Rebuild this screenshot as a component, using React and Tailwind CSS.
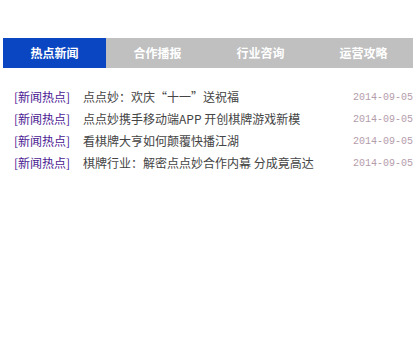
const tabs = ['热点新闻', '合作播报', '行业咨询', '运营攻略'];

const news = [
    { title: '点点妙：欢庆“十一”送祝福', date: '2014-09-05' },
    { title: '点点妙携手移动端APP 开创棋牌游戏新模', date: '2014-09-05' },
    { title: '看棋牌大亨如何颠覆快播江湖', date: '2014-09-05' },
    { title: '棋牌行业：解密点点妙合作内幕 分成竟高达', date: '2014-09-05' }
];

const App = () => {
    return (
        <div className="w-[413px] h-[346px] bg-white overflow-hidden" style={{ fontFamily: '"Noto Sans CJK SC", sans-serif' }}>
            {/* Tabs */}
            <div className="mt-[38px] ml-[3px] flex h-[30px] w-[412px] bg-[#c0c0c0]">
                {tabs.map((t, i) => (
                    <div
                        key={t}
                        className={`w-[103px] shrink-0 flex items-center justify-center text-[12px] font-bold text-white ${i === 0 ? 'bg-[#0b46c2]' : ''}`}
                    >
                        {t}
                    </div>
                ))}
            </div>

            {/* News list */}
            <ul className="mt-[18px] pl-[14px] text-[12px]">
                {news.map((n, i) => (
                    <li key={i} className="flex items-center h-[22px]">
                        <span className="w-[69px] shrink-0 text-[#4b1a93]">[新闻热点]</span>
                        <span className="flex-1 text-[#444444] whitespace-nowrap overflow-hidden">{n.title}</span>
                        <span className="shrink-0 w-[60px] text-[#b59cab] text-[10px]" style={{ fontFamily: '"Liberation Mono", monospace' }}>{n.date}</span>
                    </li>
                ))}
            </ul>
        </div>
    );
};

export default App;
